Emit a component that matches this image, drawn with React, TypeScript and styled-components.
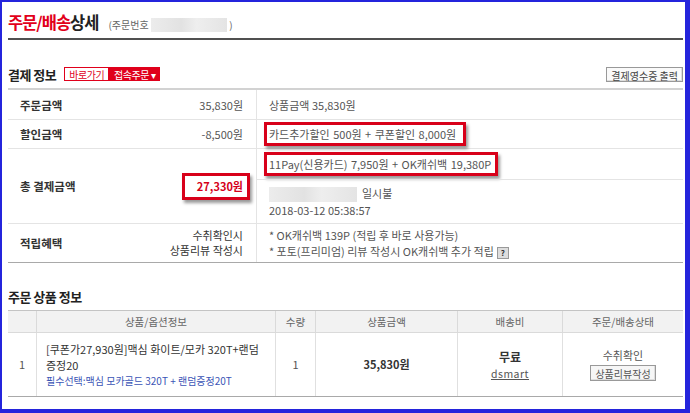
import styled, { createGlobalStyle } from 'styled-components';

const GlobalStyle = createGlobalStyle`
  html, body { margin: 0; padding: 0; background: #fff; }
  body {
    font-family: "Noto Sans CJK KR", "Noto Sans", sans-serif;
    font-size: 11px;
    color: #555;
  }
`;

const Frame = styled.div`
  box-sizing: border-box;
  width: 690px;
  height: 413px;
  border-style: solid;
  border-color: #2424dc;
  border-width: 2px 5px 4px 2px;
  padding: 0 2px 0 6px;
  overflow: hidden;
`;

const TitleBar = styled.div`
  box-sizing: border-box;
  height: 38px;
  padding-top: 8px;
  display: flex;
  align-items: baseline;
  gap: 10px;
  border-bottom: 2px solid #505050;
`;

const Title = styled.h1`
  margin: 0;
  font-size: 16.5px;
  font-weight: bold;
  letter-spacing: -1px;
  color: #222;
  em { font-style: normal; color: #e2001a; }
`;

const OrderNo = styled.span`
  display: flex;
  align-items: center;
  font-size: 10px;
  color: #666;
`;

const Blur = styled.span<{ w: number; h?: number }>`
  display: inline-block;
  width: ${p => p.w}px;
  height: ${p => p.h ?? 13}px;
  background: linear-gradient(90deg, #ececec, #e2e2e2 40%, #eeeeee 60%, #e4e4e4);
  vertical-align: middle;
`;

const SectionHead = styled.div<{ top: number }>`
  display: flex;
  align-items: center;
  height: 16px;
  margin-top: ${p => p.top}px;
  margin-bottom: 6px;
`;

const SectionTitle = styled.h2`
  margin: 0 8px 0 0;
  font-size: 13px;
  font-weight: bold;
  letter-spacing: -0.5px;
  color: #222;
`;

const TagButton = styled.span<{ filled?: boolean }>`
  box-sizing: border-box;
  height: 14px;
  padding: 0 4px;
  display: inline-flex;
  align-items: center;
  font-size: 10px;
  letter-spacing: -0.5px;
  border: 1px solid #e0001b;
  background: ${p => (p.filled ? '#e0001b' : '#fff')};
  color: ${p => (p.filled ? '#fff' : '#e0001b')};
`;

const PrintButton = styled.button`
  margin-left: auto;
  box-sizing: border-box;
  height: 15px;
  padding: 0 4px;
  font-family: inherit;
  font-size: 10px;
  color: #444;
  background: #fafafa;
  border: 1px solid #999;
  box-shadow: inset -1px -1px 0 #ddd;
`;

const PayTable = styled.div`
  border-top: 2px solid #d2d2d2;
  border-bottom: 1px solid #a9a9a9;
`;

const PayRow = styled.div<{ h: number }>`
  display: grid;
  grid-template-columns: 248px 1fr;
  height: ${p => p.h}px;
  & + & { border-top: 1px solid #e4e4e4; }
`;

const LeftCell = styled.div`
  display: flex;
  align-items: center;
  justify-content: space-between;
  padding: 0 13px 0 12px;
`;

const Label = styled.span`
  font-size: 11.5px;
  font-weight: bold;
  color: #333;
`;

const Amount = styled.span`
  color: #555;
`;

const Conditions = styled.span`
  text-align: right;
  line-height: 15px;
  font-size: 11px;
  color: #333;
`;

const RightCell = styled.div`
  display: flex;
  flex-direction: column;
  justify-content: center;
  border-left: 1px solid #e4e4e4;
  padding-left: 12px;
  line-height: 16px;
`;

const SplitCell = styled.div`
  display: grid;
  grid-template-rows: 30px 1fr;
  border-left: 1px solid #e4e4e4;
`;

const SubCell = styled.div`
  display: flex;
  flex-direction: column;
  justify-content: center;
  padding-left: 12px;
  line-height: 16px;
  & + & { border-top: 1px solid #e4e4e4; }
`;

const Mark = styled.span<{ pr?: number }>`
  align-self: flex-start;
  display: inline-block;
  border: 3px solid #d8001a;
  box-shadow: 2px 3px 3px rgba(0, 0, 0, 0.4);
  padding: 2px ${p => p.pr ?? 7}px 2px 2px;
  margin-left: -5px;
  line-height: 14px;
  background: #fff;
  word-spacing: 1px;
`;

const TotalMark = styled.span`
  display: inline-block;
  border: 3px solid #d8001a;
  box-shadow: 2px 3px 3px rgba(0, 0, 0, 0.4);
  padding: 4px 4px 4px 12px;
  margin-right: -7px;
  line-height: 13px;
  color: #d5001a;
  font-weight: bold;
`;

const HelpIcon = styled.span`
  display: inline-flex;
  align-items: center;
  justify-content: center;
  width: 10px;
  height: 10px;
  margin-left: 3px;
  font-size: 8px;
  font-weight: bold;
  color: #333;
  background: #ddd;
  border: 1px solid #999;
  vertical-align: middle;
`;

const ProductTable = styled.div`
  display: grid;
  grid-template-columns: 28px 239px 40px 142px 105px 1fr;
  border-top: 1px solid #c4c4c4;
  border-bottom: 1px solid #a9a9a9;
`;

const Th = styled.div<{ first?: boolean }>`
  height: 21px;
  display: flex;
  align-items: center;
  justify-content: center;
  background: #f2f2f2;
  border-bottom: 1px solid #dadada;
  border-left: ${p => (p.first ? 'none' : '1px solid #dadada')};
  font-size: 10.5px;
  color: #666;
`;

const Td = styled.div<{ first?: boolean; align?: string }>`
  height: 63px;
  display: flex;
  flex-direction: column;
  justify-content: center;
  align-items: ${p => p.align ?? 'center'};
  padding: ${p => (p.align ? '0 0 0 9px' : '0')};
  border-left: ${p => (p.first ? 'none' : '1px solid #e0e0e0')};
  line-height: 15px;
  color: #555;
`;

const ProductName = styled.span`
  font-size: 11px;
  color: #333;
  line-height: 16px;
`;

const OptionText = styled.span`
  font-size: 10px;
  color: #3b55b6;
`;

const Price = styled.span`
  font-weight: bold;
  color: #333;
`;

const Free = styled.span`
  font-size: 12px;
  font-weight: bold;
  color: #333;
  line-height: 18px;
`;

const SellerLink = styled.a`
  font-size: 10.5px;
  color: #555;
  text-decoration: underline;
  letter-spacing: 0.5px;
`;

const ReviewButton = styled.button`
  margin-top: 2px;
  box-sizing: border-box;
  height: 16px;
  padding: 0 4px;
  font-family: inherit;
  font-size: 10px;
  color: #555;
  background: #f6f6f6;
  border: 1px solid #999;
  box-shadow: inset -1px -1px 0 #ddd;
`;

export default function App() {
  return (
    <Frame>
      <GlobalStyle />
      <TitleBar>
        <Title><em>주문/배송</em>상세</Title>
        <OrderNo>(주문번호&nbsp;<Blur w={76} h={14} />&nbsp;)</OrderNo>
      </TitleBar>

      <SectionHead top={26}>
        <SectionTitle>결제 정보</SectionTitle>
        <TagButton>바로가기</TagButton>
        <TagButton filled>접속주문 ▾</TagButton>
        <PrintButton>결제영수증 출력</PrintButton>
      </SectionHead>

      <PayTable>
        <PayRow h={29}>
          <LeftCell>
            <Label>주문금액</Label>
            <Amount>35,830원</Amount>
          </LeftCell>
          <RightCell>상품금액 35,830원</RightCell>
        </PayRow>
        <PayRow h={28}>
          <LeftCell>
            <Label>할인금액</Label>
            <Amount>-8,500원</Amount>
          </LeftCell>
          <RightCell>
            <Mark>카드추가할인 500원 + 쿠폰할인 8,000원</Mark>
          </RightCell>
        </PayRow>
        <PayRow h={74}>
          <LeftCell>
            <Label>총 결제금액</Label>
            <TotalMark>27,330원</TotalMark>
          </LeftCell>
          <SplitCell>
            <SubCell>
              <Mark pr={4}>11Pay(신용카드) 7,950원 + OK캐쉬백 19,380P</Mark>
            </SubCell>
            <SubCell>
              <span><Blur w={88} h={15} />&nbsp; 일시불</span>
              <span>2018-03-12 05:38:57</span>
            </SubCell>
          </SplitCell>
        </PayRow>
        <PayRow h={38}>
          <LeftCell>
            <Label>적립혜택</Label>
            <Conditions>수취확인시<br />상품리뷰 작성시</Conditions>
          </LeftCell>
          <RightCell>
            <span>* OK캐쉬백 139P (적립 후 바로 사용가능)</span>
            <span>* 포토(프리미엄) 리뷰 작성시 OK캐쉬백 추가 적립<HelpIcon>?</HelpIcon></span>
          </RightCell>
        </PayRow>
      </PayTable>

      <SectionHead top={25}>
        <SectionTitle>주문 상품 정보</SectionTitle>
      </SectionHead>

      <ProductTable>
        <Th first />
        <Th>상품/옵션정보</Th>
        <Th>수량</Th>
        <Th>상품금액</Th>
        <Th>배송비</Th>
        <Th>주문/배송상태</Th>

        <Td first>1</Td>
        <Td align="flex-start">
          <ProductName>[쿠폰가27,930원]맥심 화이트/모카 320T+랜덤<br />증정20</ProductName>
          <OptionText>필수선택:맥심 모카골드 320T + 랜덤증정20T</OptionText>
        </Td>
        <Td>1</Td>
        <Td><Price>35,830원</Price></Td>
        <Td>
          <Free>무료</Free>
          <SellerLink>dsmart</SellerLink>
        </Td>
        <Td>
          <span>수취확인</span>
          <ReviewButton>상품리뷰작성</ReviewButton>
        </Td>
      </ProductTable>
    </Frame>
  );
}
